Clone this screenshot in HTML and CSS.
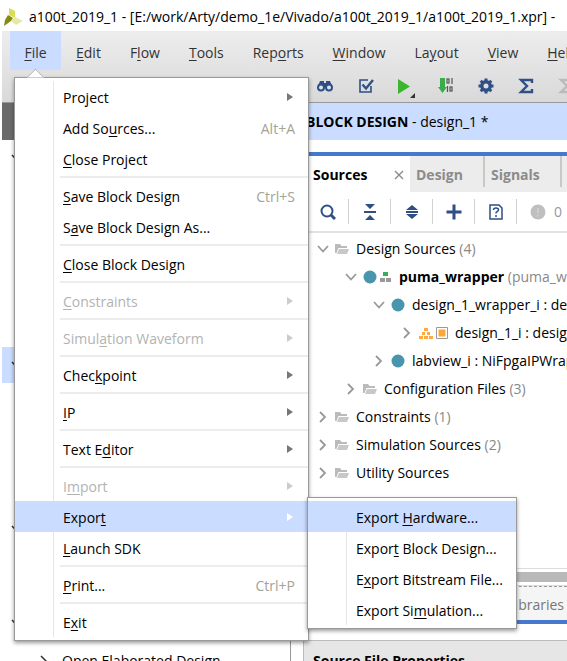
FILE: index.html
```html
<!DOCTYPE html>
<html lang="en">
<head>
<meta charset="utf-8">
<title>a100t_2019_1</title>
<link rel="stylesheet" href="styles.css">
</head>
<body>
<svg width="0" height="0" class="defs" aria-hidden="true">
  <symbol id="down" viewBox="0 0 12 12"><path d="M1 3l5 5.500 5-5.500" fill="none" stroke="#999" stroke-width="1.800"/></symbol>
  <symbol id="right" viewBox="0 0 12 12"><path d="M3 1l5 5-5 5" fill="none" stroke="#999" stroke-width="1.800"/></symbol>
  <symbol id="dark-down" viewBox="0 0 12 12"><path d="M1 3l5 5.500 5-5.500" fill="none" stroke="#333" stroke-width="1.500"/></symbol>
  <symbol id="dark-right" viewBox="0 0 12 12"><path d="M3 1l5 5-5 5" fill="none" stroke="#333" stroke-width="1.500"/></symbol>
  <symbol id="folder" viewBox="0 0 14 12"><path d="M0 1h5l1.500 2H12v2H3.500L1.500 10H0z" fill="#bbb"/><path d="M4 6h10l-2 5H2z" fill="#c8c8c8"/></symbol>
  <symbol id="dot" viewBox="0 0 14 14"><circle cx="7" cy="7" r="6.500" fill="#4a95ae"/></symbol>
</svg>
<div class="window">
  <header class="title">
    <svg class="logo" width="20" height="20" viewBox="0 0 20 20"><path d="M5 1l6 3v7l-6-3z" fill="#d9de55"/><path d="M4 8l5 3-2 3-7 5 1-6z" fill="#858a10"/><path d="M11 10l8 4-7 4-5-4z" fill="#e6e8a8"/></svg>
    <span>a100t_2019_1 - [E:/work/Arty/demo_1e/Vivado/a100t_2019_1/a100t_2019_1.xpr] -</span>
  </header>
  <div class="chrome">
    <nav class="menubar">
      <div class="root">
        <button class="open"><u>F</u>ile</button>
        <div class="menu main">
          <button><span>Pro<u>j</u>ect</span><i class="arrow"></i></button>
          <button><span>Add So<u>u</u>rces...</span><kbd>Alt+A</kbd></button>
          <button><span><u>C</u>lose Project</span></button>
          <hr>
          <button><span><u>S</u>ave Block Design</span><kbd>Ctrl+S</kbd></button>
          <button><span>S<u>a</u>ve Block Design As...</span></button>
          <hr>
          <button><span><u>C</u>lose Block Design</span></button>
          <hr>
          <button disabled><span><u>C</u>onstraints</span><i class="arrow"></i></button>
          <hr>
          <button disabled><span>Simul<u>a</u>tion Waveform</span><i class="arrow"></i></button>
          <hr>
          <button><span>Chec<u>k</u>point</span><i class="arrow"></i></button>
          <hr>
          <button><span><u>I</u>P</span><i class="arrow"></i></button>
          <hr>
          <button><span>Text E<u>d</u>itor</span><i class="arrow"></i></button>
          <hr>
          <button disabled><span>I<u>m</u>port</span><i class="arrow"></i></button>
          <div class="branch">
            <button class="active"><span>Expor<u>t</u></span><i class="arrow"></i></button>
            <div class="menu sub">
              <button class="active"><span>Export <u>H</u>ardware...</span></button>
              <button><span>Expor<u>t</u> Block Design...</span></button>
              <button><span>E<u>x</u>port Bitstream File...</span></button>
              <button><span>Export Si<u>m</u>ulation...</span></button>
            </div>
          </div>
          <button><span><u>L</u>aunch SDK</span></button>
          <hr>
          <button><span><u>P</u>rint...</span><kbd>Ctrl+P</kbd></button>
          <hr>
          <button><span>E<u>x</u>it</span></button>
        </div>
      </div>
      <button><u>E</u>dit</button>
      <button>F<u>l</u>ow</button>
      <button><u>T</u>ools</button>
      <button>Rep<u>o</u>rts</button>
      <button><u>W</u>indow</button>
      <button>La<u>y</u>out</button>
      <button><u>V</u>iew</button>
      <button><u>H</u>elp</button>
    </nav>
    <div class="tools">
      <button aria-label="Find"><svg width="16" height="14" viewBox="0 0 16 14"><path d="M3 2h4v2h2V2h4l2 5-3 1H4L1 7z" fill="#2f4f85"/><circle cx="4" cy="8.500" r="3" fill="#dce3ee" stroke="#2f4f85" stroke-width="2"/><circle cx="12" cy="8.500" r="3" fill="#dce3ee" stroke="#2f4f85" stroke-width="2"/></svg></button>
      <button aria-label="Validate"><svg width="16" height="16" viewBox="0 0 16 16"><path d="M10 2H2v12h11V8" fill="none" stroke="#2f4f85" stroke-width="1.600"/><path d="M4.500 6.500l3.500 4L15 2" fill="none" stroke="#2f4f85" stroke-width="2.400"/></svg></button>
      <button aria-label="Run"><svg width="18" height="24" viewBox="0 0 18 24"><path d="M1 5l12 7.500L1 20z" fill="#3db52c"/><path d="M18 19v5h-5z" fill="#333"/></svg></button>
      <button aria-label="Bitstream"><svg width="16" height="16" viewBox="0 0 16 16"><path d="M2 0h5v9h2l-4.500 6L0 9h2z" fill="#3aad49"/><g fill="none" stroke="#555" stroke-width="1.200"><rect x="9" y="1" width="2" height="4"/><path d="M14 0v6M9.500 8v6"/><rect x="12" y="9" width="2" height="4"/></g></svg></button>
      <button aria-label="Settings"><svg width="16" height="16" viewBox="0 0 16 16"><g stroke="#2f4f85" fill="none"><circle cx="8" cy="8" r="4.200" stroke-width="3.400"/><path d="M8 0.500v3M8 12.500v3M0.500 8h3M12.500 8h3M2.700 2.700l2 2M11.300 11.300l2 2M13.300 2.700l-2 2M4.700 11.300l-2 2" stroke-width="3"/></g></svg></button>
      <button aria-label="Report"><svg width="16" height="16" viewBox="0 0 16 16"><path d="M14 5V2H3l6 6-6 6h11v-3" fill="none" stroke="#2f4f85" stroke-width="2.400"/></svg></button>
      <button aria-label="Cancel report" disabled><svg width="16" height="16" viewBox="0 0 16 16"><path d="M14 5V2H3l6 6-6 6h11v-3" fill="none" stroke="#bbb" stroke-width="2.400"/></svg></button>
    </div>
  </div>
  <div class="body">
    <aside class="flow">
      <div class="flow-head"></div>
      <div class="flow-row"><svg width="12" height="12"><use href="#dark-down"/></svg></div>
      <div class="flow-gap"></div>
      <div class="flow-row selected"><svg width="12" height="12"><use href="#dark-down"/></svg></div>
      <div class="flow-gap"></div>
      <div class="flow-row"><svg width="12" height="12"><use href="#dark-down"/></svg></div>
      <div class="flow-gap short"></div>
      <div class="flow-row"><svg width="12" height="12"><use href="#dark-down"/></svg></div>
      <div class="flow-item"><svg width="12" height="12"><use href="#dark-right"/></svg>Open Elaborated Design</div>
    </aside>
    <main>
      <h1><b>BLOCK DESIGN</b> - design_1 *</h1>
      <section class="panel">
        <div class="tabs">
          <button class="on">Sources<svg width="10" height="10" viewBox="0 0 10 10"><path d="M1 1l8 8M9 1L1 9" stroke="#888" stroke-width="1.300"/></svg></button>
          <button>Design</button>
          <button>Signals</button>
        </div>
        <div class="actions">
          <button aria-label="Search"><svg width="16" height="16" viewBox="0 0 16 16"><circle cx="7" cy="7" r="5.500" fill="none" stroke="#2f4f85" stroke-width="2"/><path d="M11 11l4 4" stroke="#2f4f85" stroke-width="3"/></svg></button>
          <button aria-label="Collapse all"><svg width="14" height="16" viewBox="0 0 14 16"><path d="M2 0h10L7 5zM2 16h10l-5-5zM1 7h12v2H1z" fill="#2f4f85"/></svg></button>
          <button aria-label="Expand all"><svg width="14" height="16" viewBox="0 0 14 16"><path d="M1 6h12L7 1zM1 10h12l-6 5zM1 7h12v2H1z" fill="#2f4f85"/></svg></button>
          <button aria-label="Add"><svg width="16" height="16" viewBox="0 0 16 16"><path d="M8 0.500v15M0.500 8h15" stroke="#2f4f85" stroke-width="3"/></svg></button>
          <button aria-label="Show details"><svg width="14" height="16" viewBox="0 0 14 16"><path d="M1 1h9l3 3v11H1z" fill="none" stroke="#2f4f85" stroke-width="1.500"/><path d="M4.500 6q0-2 2.500-2t2.500 2q0 1-1.500 1.700Q7 8 7 9.500M7 11v2" fill="none" stroke="#2f4f85" stroke-width="1.500"/></svg></button>
          <button class="count"><svg width="16" height="16" viewBox="0 0 16 16"><circle cx="8" cy="8" r="7.500" fill="#bfbfbf"/><path d="M8 4v5M8 10.500v2" stroke="#d4d4d4" stroke-width="1.500"/></svg>0</button>
        </div>
        <ul class="tree">
          <li><svg width="12" height="12"><use href="#down"/></svg><svg class="folder" width="14" height="12"><use href="#folder"/></svg><span>Design Sources <em>(4)</em></span></li>
          <li class="l1"><svg width="12" height="12"><use href="#down"/></svg><svg class="dot" width="14" height="14"><use href="#dot"/></svg><svg class="blocks" width="12" height="12" viewBox="0 0 12 12"><path d="M3 1h5v4H3z" fill="#3aad59"/><path d="M0 7h5v4H0zM6 7h5v4H6z" fill="#999"/></svg><span><b>puma_wrapper</b> <em>(puma_wrapper.vhd)</em></span></li>
          <li class="l2"><svg width="12" height="12"><use href="#down"/></svg><svg class="dot" width="14" height="14"><use href="#dot"/></svg><span>design_1_wrapper_i : design_1_wrapper</span></li>
          <li class="l3"><svg width="12" height="12"><use href="#right"/></svg><svg class="hier" width="14" height="12" viewBox="0 0 14 12"><path d="M5 1h4v3H5zM3 5h3v3H3zM8 5h3v3H8zM0 9h4v3H0zM5 9h4v3H5zM10 9h4v3h-4z" fill="#ffaa3c"/></svg><svg class="chip" width="12" height="12" viewBox="0 0 12 12"><path d="M.5.5h11v11H.5z" fill="#fff" stroke="#999"/><path d="M2.500 2.500h7v7h-7z" fill="#ffa734"/></svg><span>design_1_i : design_1</span></li>
          <li class="l2"><svg width="12" height="12"><use href="#right"/></svg><svg class="dot" width="14" height="14"><use href="#dot"/></svg><span>labview_i : NiFpgaIPWrapper</span></li>
          <li class="l1"><svg width="12" height="12"><use href="#right"/></svg><svg class="folder" width="14" height="12"><use href="#folder"/></svg><span>Configuration Files <em>(3)</em></span></li>
          <li><svg width="12" height="12"><use href="#right"/></svg><svg class="folder" width="14" height="12"><use href="#folder"/></svg><span>Constraints <em>(1)</em></span></li>
          <li><svg width="12" height="12"><use href="#right"/></svg><svg class="folder" width="14" height="12"><use href="#folder"/></svg><span>Simulation Sources <em>(2)</em></span></li>
          <li><svg width="12" height="12"><use href="#right"/></svg><svg class="folder" width="14" height="12"><use href="#folder"/></svg><span>Utility Sources</span></li>
        </ul>
        <div class="scroll"></div>
        <div class="subtabs"><button>Libraries</button></div>
      </section>
      <h2>Source File Properties</h2>
    </main>
  </div>
</div>
</body>
</html>
```
FILE: styles.css
```css
* { box-sizing: border-box; }
body {
  margin: 0;
  background: #fff;
  color: #000;
  font: 14px/20px "Open Sans", "Noto Sans", sans-serif;
}
button { font: inherit; color: inherit; background: none; border: 0; padding: 0; margin: 0; white-space: nowrap; }
u { text-underline-offset: 2px; text-decoration-thickness: 1px; }
svg { flex: none; }
em { font-style: normal; color: #888; }
.defs { position: absolute; }
.window { height: 100vh; display: flex; flex-direction: column; overflow: hidden; }

.title { flex: none; height: 31px; display: flex; align-items: center; gap: 5px; padding: 2px 0 0 4px; white-space: nowrap; }

.chrome { flex: none; margin-left: 2px; background: linear-gradient(#ededed, #d9d9d9); border-bottom: 1px solid #999; }
.menubar { display: flex; height: 39px; padding-left: 8px; color: #333; }
.root { position: relative; }
.menubar > button, .open { flex: none; height: 39px; padding: 4px 14px 0 15px; }
.open { background: #cadcff; width: 51px; padding-left: 14px; }
.tools { display: flex; height: 32px; padding-left: 302px; overflow: hidden; }
.tools button { width: 41px; flex: none; display: flex; align-items: center; justify-content: center; }
.tools button:nth-child(n+3) { width: 40px; }

.menu { position: absolute; z-index: 2; background: #fff; color: #000; border: 1px solid #999; padding: 3px 0; box-shadow: 0 2px 4px #0006; }
.menu::before { content: ""; position: absolute; top: 3px; bottom: 3px; left: 38px; width: 1px; background: #e6e6e6; }
.main { top: 46px; left: 4px; width: 295px; }
.main::after { content: ""; position: absolute; top: -7px; left: 14px; width: 12px; height: 12px; background: #fff; border: solid #aaa; border-width: 1px 0 0 1px; transform: rotate(45deg); clip-path: polygon(0 0, 100% 0, 0 100%); }
.menu button { position: relative; display: flex; align-items: center; width: 100%; height: 31px; padding: 0 13px 0 48px; }
.menu span, .menu kbd { padding-top: 2px; }
.menu button:disabled { color: #b3b3b3; }
.menu .active { background: #cadcff; }
.menu hr { height: 2px; margin: 2px 0 2px 45px; border: 0; background: #ececec; }
.menu kbd { margin-left: auto; font: inherit; color: #a3a396; }
.arrow { margin-left: auto; border: solid transparent; border-width: 4px 0 4px 6px; border-left-color: #777; margin-right: 2px; }
:disabled .arrow { border-left-color: #ccc; }
.active .arrow { border-left-color: #fff; }
.branch { position: relative; }
.sub { top: -4px; left: 292px; width: 210px; }

.body { flex: 1; min-height: 0; display: flex; }
.flow { flex: none; width: 289px; margin-left: 2px; border-right: 1px solid #999; display: flex; flex-direction: column; }
.flow-head { flex: none; height: 37px; background: #6b6b6b; }
.flow-row { flex: none; height: 36px; display: flex; align-items: center; padding-left: 9px; }
.flow-gap { flex: 170 1 0; }
.short { flex-grow: 0; flex-basis: 58px; }
.selected { background: #cadcff; }
.flow-gap + .selected + .flow-gap { flex-grow: 128; }
.flow-item { flex: none; display: flex; align-items: center; height: 22px; margin-top: 9px; margin-bottom: -11px; padding-left: 36px; gap: 12px; }

main { flex: 1; min-width: 0; margin-left: 12px; display: flex; flex-direction: column; }
h1 { flex: none; height: 37px; margin: 0; padding-left: 3px; background: #cadcff; font: inherit; line-height: 37px; white-space: nowrap; }
.panel { flex: 1; min-height: 0; margin-top: 12px; border-top: 4px solid #4678ce; border-bottom: 4px solid #4678ce; display: flex; flex-direction: column; overflow: hidden; }
.tabs { flex: none; display: flex; height: 36px; background: #ececec; }
.tabs button { flex: none; height: 31px; padding: 6px 20px 0 6px; font-weight: 700; color: #8b8b8b; border-right: 2px solid #c8c8c8; }
.tabs .on { width: 107px; height: 36px; padding: 2px 6px 0 10px; display: flex; align-items: center; justify-content: space-between; background: #fff; color: #000; border: 0; }
.actions { flex: none; display: flex; align-items: center; height: 41px; border-bottom: 2px solid #e2e2e2; padding-left: 4px; }
.actions button { flex: none; width: 42px; height: 25px; display: flex; align-items: center; justify-content: center; border-right: 1px solid #d0d0d0; }
.actions .count { width: 58px; gap: 8px; border: 0; color: #999; }
.tree { flex: 1; list-style: none; margin: 0; padding: 2px 0 0 14px; overflow: hidden; }
.tree li { display: flex; align-items: center; height: 28px; white-space: nowrap; }
.tree .l1 { padding-left: 28px; }
.tree .l2 { padding-left: 56px; }
.tree .l3 { padding-left: 84px; }
.tree span { margin-left: 7px; }
.folder, .dot, .hier { margin-left: 6px; }
.blocks, .chip { margin-left: 3px; }
.scroll { flex: none; height: 18px; border: solid #ddd; border-width: 1px 0; background: linear-gradient(#fff 3px, #b9b9b9 3px 13px, #fff 13px); }
.subtabs { flex: none; display: flex; justify-content: flex-end; height: 34px; border-top: 1px dashed #999; background: #f5f5f5; color: #777; }
.subtabs button { padding: 2px 3px 0 14px; }
h2 { flex: none; height: 21px; margin: 16px 0 0; padding: 8px 0 0 9px; background: #e6e6e6; border: solid #bbb; border-width: 1px 0 0 1px; font-size: 14px; line-height: 24px; overflow: hidden; }
```
